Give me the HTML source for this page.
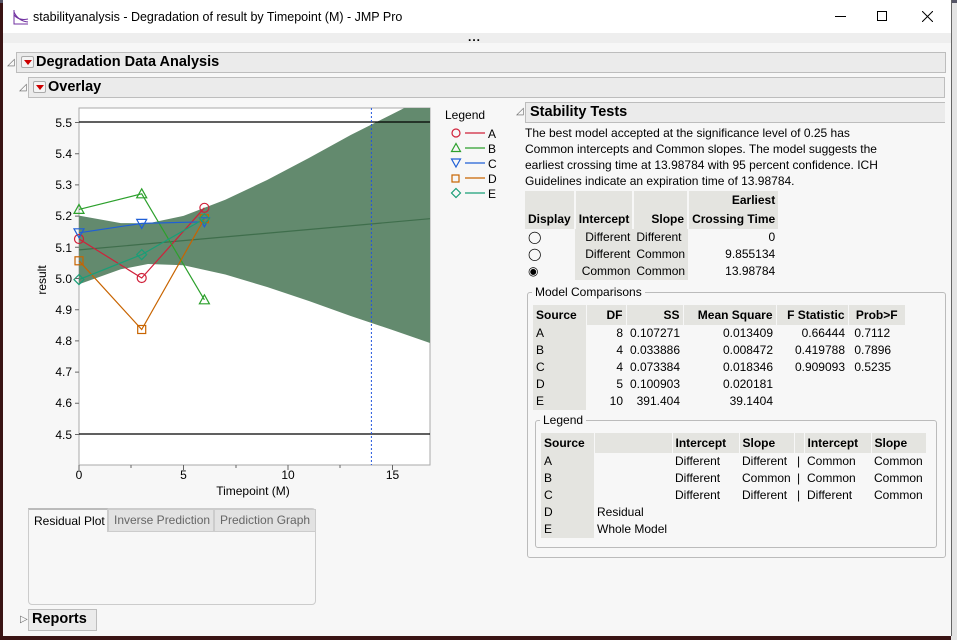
<!DOCTYPE html>
<html><head><meta charset="utf-8"><style>
*{margin:0;padding:0;box-sizing:border-box}
body{width:957px;height:640px;overflow:hidden;background:#3a1414;font-family:"Liberation Sans",sans-serif;font-size:12px;color:#000;position:relative}
.a{position:absolute}
.win{left:3px;top:0;width:949px;height:636px;background:#f7f7f7;border-right:1px solid #666}
.hdr{position:absolute;background:#ebebeb;border:1px solid #bdbdbd;font-weight:bold}
.tri{position:absolute;font-size:10px;color:#666}
.dd{position:absolute;width:13px;height:12px;border:1px solid #aaa;border-radius:2px;background:#f4f4f4}
.dd:after{content:"";position:absolute;left:2px;top:3px;border-left:4px solid transparent;border-right:4px solid transparent;border-top:5px solid #c00}
table{border-collapse:collapse;font-size:12px}
td,th{padding:0 3px;white-space:nowrap;line-height:17px}
th{background:#e4e4e0;font-weight:bold}
.g{background:#e4e4e0}
.r{text-align:right}
</style></head><body>
<div class="a" style="left:951px;top:0;width:6px;height:640px;background:#e4e4e4"></div>
<div class="a" style="left:0;top:0;width:957px;height:3px;background:#556"></div>
<div class="a win">
 <div class="a" style="left:0;top:0;width:948px;height:33px;background:#fff"></div>
 <svg class="a" style="left:10px;top:9px" width="16" height="16"><path d="M1 1V15H15M1 3Q5 12 15 13M1 6Q6 12 15 10" stroke="#7030a0" fill="none"/></svg>
 <div class="a" style="left:30px;top:10px;font-size:12.5px">stabilityanalysis - Degradation of result by Timepoint (M) - JMP Pro</div>
 <div class="a" style="left:832px;top:16px;width:11px;height:1px;background:#000"></div>
 <div class="a" style="left:874px;top:11px;width:10px;height:10px;border:1px solid #000"></div>
 <svg class="a" style="left:919px;top:11px" width="11" height="11"><path d="M0 0L11 11M11 0L0 11" stroke="#000"/></svg>
 <div class="a" style="left:0;top:33px;width:948px;height:10px;background:#eee"></div>
 <div class="a" style="left:465px;top:30px;font-weight:bold;font-size:12px;letter-spacing:1px">...</div>

 <div class="tri" style="left:4px;top:57px">◿</div>
 <div class="hdr" style="left:13px;top:52px;width:930px;height:21px"></div>
 <div class="dd" style="left:18px;top:56px"></div>
 <div class="a" style="left:33px;top:54px;font-weight:bold;font-size:14.5px">Degradation Data Analysis</div>

 <div class="tri" style="left:16px;top:82px">◿</div>
 <div class="hdr" style="left:25px;top:77px;width:917px;height:21px"></div>
 <div class="dd" style="left:30px;top:81px"></div>
 <div class="a" style="left:45px;top:79px;font-weight:bold;font-size:14.5px">Overlay</div>

 <div class="tri" style="left:513px;top:106px">◿</div>
 <div class="hdr" style="left:522px;top:102px;width:420px;height:21px;border-right:none"></div>
 <div class="a" style="left:527px;top:104px;font-weight:bold;font-size:14.5px">Stability Tests</div>
 <div class="a" style="left:522px;top:125px;line-height:16px;font-size:12px">The best model accepted at the significance level of 0.25 has<br>Common intercepts and Common slopes. The model suggests the<br>earliest crossing time at 13.98784 with 95 percent confidence. ICH<br>Guidelines indicate an expiration time of 13.98784.</div>
 <table class="a" style="left:522px;top:191px">
 <tr><th style="background:#e4e4e0;border-right:2px solid #f7f7f7"></th><th style="border-right:2px solid #f7f7f7"></th><th style="border-right:2px solid #f7f7f7"></th><th class="r" style="line-height:18px">Earliest</th></tr>
 <tr><th style="text-align:left;border-right:2px solid #f7f7f7;line-height:20px">Display</th><th class="r" style="border-right:2px solid #f7f7f7">Intercept</th><th class="r" style="border-right:2px solid #f7f7f7">Slope</th><th class="r">Crossing Time</th></tr>
 <tr><td style="background:#f7f7f7">◯</td><td class="g r">Different</td><td class="g">Different</td><td class="r">0</td></tr>
 <tr><td style="background:#f7f7f7">◯</td><td class="g r">Different</td><td class="g">Common</td><td class="r">9.855134</td></tr>
 <tr><td style="background:#f7f7f7">◉</td><td class="g r">Common</td><td class="g">Common</td><td class="r">13.98784</td></tr>
 </table>

 <div class="a" style="left:524px;top:292px;width:419px;height:266px;border:1px solid #bbb;border-radius:3px"></div>
 <div class="a" style="left:529px;top:285px;background:#f7f7f7;padding:0 3px">Model Comparisons</div>
 <table class="a" style="left:530px;top:305px">
 <tr><th style="text-align:left;width:53px;line-height:20px">Source</th><th class="r" style="width:40px;border-left:1px solid #f7f7f7">DF</th><th class="r" style="width:57px;border-left:1px solid #f7f7f7">SS</th><th class="r" style="width:93px;border-left:1px solid #f7f7f7">Mean Square</th><th class="r" style="width:72px;border-left:1px solid #f7f7f7">F Statistic</th><th style="width:57px;border-left:1px solid #f7f7f7">Prob&gt;F</th></tr>
 <tr><td class="g">A</td><td class="r">8</td><td class="r">0.107271</td><td class="r">0.013409</td><td class="r">0.66444</td><td>&nbsp;0.7112</td></tr>
 <tr><td class="g">B</td><td class="r">4</td><td class="r">0.033886</td><td class="r">0.008472</td><td class="r">0.419788</td><td>&nbsp;0.7896</td></tr>
 <tr><td class="g">C</td><td class="r">4</td><td class="r">0.073384</td><td class="r">0.018346</td><td class="r">0.909093</td><td>&nbsp;0.5235</td></tr>
 <tr><td class="g">D</td><td class="r">5</td><td class="r">0.100903</td><td class="r">0.020181</td><td></td><td></td></tr>
 <tr><td class="g">E</td><td class="r">10</td><td class="r">391.404</td><td class="r">39.1404</td><td></td><td></td></tr>
 </table>
 <div class="a" style="left:532px;top:420px;width:402px;height:128px;border:1px solid #bbb;border-radius:3px"></div>
 <div class="a" style="left:537px;top:413px;background:#f7f7f7;padding:0 3px">Legend</div>
 <table class="a" style="left:538px;top:433px">
 <tr><th style="text-align:left;width:53px;line-height:20px">Source</th><th style="width:78px;border-left:1px solid #f7f7f7"></th><th style="text-align:left;width:67px;border-left:1px solid #f7f7f7">Intercept</th><th style="text-align:left;width:55px;border-left:1px solid #f7f7f7">Slope</th><th style="width:10px;border-left:1px solid #f7f7f7"></th><th style="text-align:left;width:67px;border-left:1px solid #f7f7f7">Intercept</th><th style="text-align:left;width:55px;border-left:1px solid #f7f7f7">Slope</th></tr>
 <tr><td class="g">A</td><td></td><td>Different</td><td>Different</td><td>|</td><td>Common</td><td>Common</td></tr>
 <tr><td class="g">B</td><td></td><td>Different</td><td>Common</td><td>|</td><td>Common</td><td>Common</td></tr>
 <tr><td class="g">C</td><td></td><td>Different</td><td>Different</td><td>|</td><td>Different</td><td>Common</td></tr>
 <tr><td class="g">D</td><td>Residual</td><td></td><td></td><td></td><td></td><td></td></tr>
 <tr><td class="g">E</td><td colspan="2">Whole Model</td><td></td><td></td><td></td><td></td></tr>
 </table>

 <div class="a" style="left:25px;top:508px;width:288px;height:97px;border:1px solid #ccc;border-radius:4px"></div>
 <div class="a" style="left:25px;top:508px;width:80px;height:24px;border:1px solid #ccc;border-top:2px solid #bbb;background:#f7f7f7;border-bottom:none;padding:4px 0 0 5px">Residual Plot</div>
 <div class="a" style="left:105px;top:509px;width:106px;height:23px;border:1px solid #ccc;background:#e2e2e2;color:#666;padding:3px 0 0 5px">Inverse Prediction</div>
 <div class="a" style="left:211px;top:509px;width:102px;height:23px;border:1px solid #ccc;background:#e2e2e2;color:#666;padding:3px 0 0 5px">Prediction Graph</div>
 <div class="tri" style="left:17px;top:614px">▷</div>
 <div class="hdr" style="left:25px;top:609px;width:69px;height:22px"></div>
 <div class="a" style="left:29px;top:611px;font-weight:bold;font-size:14.5px">Reports</div>
</div>

<svg class="a" style="left:0;top:0" width="520" height="500" font-family="Liberation Sans" font-size="12">
 <rect x="79" y="108" width="351" height="357" fill="#fff" stroke="#aaa"/>
 <clipPath id="c"><rect x="79" y="108" width="351" height="357"/></clipPath>
 <g clip-path="url(#c)">
 <path d="M79 215.6L120.8 223.1L148 223.4L183.5 215.9L225.3 199.7L267.1 180L308.9 158L350.7 135L392.5 114L430 95L430 343L392.5 330L350.7 316L308.9 301L267.1 287L225.3 274.5L183.5 265.2L148 264L120.8 269.3L79 284.2Z" fill="#638a6e"/>
 <path d="M79 249.9L430 218.7" stroke="#3f6e4c" stroke-width="1.2"/>
 <path d="M79 122H430M79 434H430" stroke="#000" stroke-width="1.3"/>
 <path d="M371.4 108V465" stroke="#2255dd" stroke-dasharray="2,2"/>
 </g>
 <g fill="none" stroke-width="1.2">
 <polyline points="79,239 141.7,278 204.4,207.8" stroke="#d0213a"/>
 <polyline points="79,209.4 141.7,193.8 204.4,299.8" stroke="#2ca02c"/>
 <polyline points="79,232.8 141.7,223.4 204.4,221.8" stroke="#1f5fd6"/>
 <polyline points="79,260.8 141.7,329.5 204.4,218.7" stroke="#c86400"/>
 <polyline points="79,279.6 141.7,254.6 204.4,218.7" stroke="#1a9e77"/>
 <g stroke="#d0213a"><circle cx="79" cy="239" r="4.5"/><circle cx="141.7" cy="278" r="4.5"/><circle cx="204.4" cy="207.8" r="4.5"/></g>
 <g stroke="#2ca02c"><path d="M79 204.4l5 9h-10z"/><path d="M141.7 188.8l5 9h-10z"/><path d="M204.4 294.8l5 9h-10z"/></g>
 <g stroke="#1f5fd6"><path d="M79 237.8l5 -9h-10z"/><path d="M141.7 228.4l5 -9h-10z"/><path d="M204.4 226.8l5 -9h-10z"/></g>
 <g stroke="#c86400"><rect x="75" y="256.8" width="8" height="8"/><rect x="137.7" y="325.5" width="8" height="8"/><rect x="200.4" y="214.7" width="8" height="8"/></g>
 <g stroke="#1a9e77"><path d="M79 274.6l5 5l-5 5l-5 -5z"/><path d="M141.7 249.6l5 5l-5 5l-5 -5z"/><path d="M204.4 213.7l5 5l-5 5l-5 -5z"/></g>
 </g>
 <g stroke="#666"><path d="M75 122.5h4M75 153.7h4M75 184.9h4M75 216.1h4M75 247.3h4M75 278.5h4M75 309.7h4M75 340.9h4M75 372.1h4M75 403.3h4M75 434.5h4"/>
 <path d="M79 465v5M131 465v3M183.5 465v5M236 465v3M288 465v5M340 465v3M392.5 465v5"/></g>
 <g text-anchor="end">
 <text x="72" y="127">5.5</text><text x="72" y="158">5.4</text><text x="72" y="189">5.3</text><text x="72" y="220">5.2</text><text x="72" y="252">5.1</text><text x="72" y="283">5.0</text><text x="72" y="314">4.9</text><text x="72" y="345">4.8</text><text x="72" y="376">4.7</text><text x="72" y="407">4.6</text><text x="72" y="439">4.5</text></g>
 <g text-anchor="middle"><text x="79" y="479">0</text><text x="183.5" y="479">5</text><text x="288" y="479">10</text><text x="392.5" y="479">15</text>
 <text x="253" y="495">Timepoint (M)</text></g>
 <text transform="translate(46,280) rotate(-90)" text-anchor="middle">result</text>
 <text x="445" y="119">Legend</text>
 <g fill="none" stroke-width="1.2">
 <circle cx="456" cy="133" r="4" stroke="#d0213a"/><path d="M465 133h20" stroke="#d0213a"/>
 <path d="M456 143.5l4.5 8h-9z" stroke="#2ca02c"/><path d="M465 148h20" stroke="#2ca02c"/>
 <path d="M456 167l4.5 -8h-9z" stroke="#1f5fd6"/><path d="M465 163h20" stroke="#1f5fd6"/>
 <rect x="452" y="175" width="7" height="7" stroke="#c86400"/><path d="M465 178h20" stroke="#c86400"/>
 <path d="M456 188.5l4.5 4.5l-4.5 4.5l-4.5 -4.5z" stroke="#1a9e77"/><path d="M465 193h20" stroke="#1a9e77"/>
 </g>
 <text x="488" y="138">A</text><text x="488" y="153">B</text><text x="488" y="168">C</text><text x="488" y="183">D</text><text x="488" y="198">E</text>
</svg>
</body></html>
